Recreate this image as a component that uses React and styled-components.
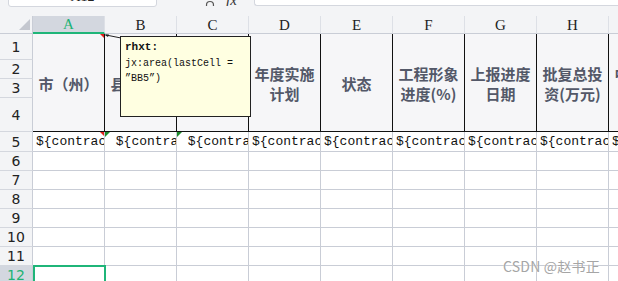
import React from "react";
import styled, { createGlobalStyle } from "styled-components";

const GlobalStyle = createGlobalStyle`
  html, body {
    margin: 0;
    padding: 0;
    background: #ffffff;
  }
  * {
    box-sizing: border-box;
  }
`;

const columns = ["A", "B", "C", "D", "E", "F", "G", "H", "I"];
const headers = [
    "市（州）",
    "县（区）",
    "项目名称",
    "年度实施计划",
    "状态",
    "工程形象进度(%)",
    "上报进度日期",
    "批复总投资(万元)",
    "中央投资(万元)",
];
const rowHeights = [26, 19, 19, 34, 20, 19, 19, 19, 19, 19, 19, 19];

const App = () => {
    return (
        <Page>
            <GlobalStyle />
            <Toolbar>
                <NameBox>A12</NameBox>
                <FxArea>
                    <svg width="12" height="12" viewBox="0 0 12 12">
                        <circle cx="5" cy="5" r="3.5" fill="none" stroke="#555" strokeWidth="1.2" />
                        <line x1="7.6" y1="7.6" x2="11" y2="11" stroke="#555" strokeWidth="1.4" />
                    </svg>
                    <FxText>fx</FxText>
                </FxArea>
                <FormulaBox />
            </Toolbar>
            <Sheet>
                <Corner>
                    <CornerMark />
                </Corner>
                {columns.map((c, i) => (
                    <ColHead key={c} $selected={i === 0}>{c}</ColHead>
                ))}

                {rowHeights.map((h, i) => (
                    <RowHead
                        key={"r" + i}
                        $selected={i === 11}
                        style={{ gridRow: i + 2 }}
                    >
                        {i + 1}
                    </RowHead>
                ))}

                {headers.map((t, i) => (
                    <TitleCell key={t} style={{ gridColumn: i + 2 }}>
                        <span>{t}</span>
                        {i === 0 && <RedMark />}
                    </TitleCell>
                ))}

                {columns.map((c, i) => (
                    <DataCell key={"d" + c} style={{ gridColumn: i + 2 }}>
                        {i === 1 || i === 2 ? "\u00a0${contract}" : "${contract}"}
                        {i === 0 && <RedMark />}
                        {(i === 1 || i === 2) && <GreenMark />}
                    </DataCell>
                ))}

                {Array.from({ length: 7 }).map((_, r) =>
                    columns.map((c, i) => (
                        <Cell
                            key={c + r}
                            style={{ gridRow: r + 7, gridColumn: i + 2 }}
                        >
                            {r === 6 && i === 0 && <Selection />}
                        </Cell>
                    ))
                )}

                <CommentLink width="18" height="6" viewBox="0 0 18 6">
                    <line x1="2" y1="1" x2="17" y2="4" stroke="#222" strokeWidth="1" />
                    <polygon points="0,0.5 5,0.5 4,3" fill="#222" />
                </CommentLink>
                <Comment>
                    <CommentAuthor>rhxt:</CommentAuthor>
                    <CommentBody>
                        jx:area(lastCell =
                        <br />
                        ”BB5”)
                    </CommentBody>
                </Comment>
            </Sheet>
            <Watermark>CSDN @赵书正</Watermark>
        </Page>
    );
};

const Page = styled.div`
    position: relative;
    width: 618px;
    height: 281px;
    overflow: hidden;
    background: #f3f4f6;
`;

const Toolbar = styled.div`
    display: flex;
    height: 16px;
    padding-left: 8px;
    background: #f3f4f6;
`;

const NameBox = styled.div`
    width: 149px;
    height: 22px;
    margin-top: -15px;
    background: #ffffff;
    border: 1px solid #d4d7de;
    border-radius: 3px;
    font: 14px/22px "Liberation Serif", serif;
    color: #222;
    text-align: center;
`;

const FxArea = styled.div`
    display: flex;
    align-items: flex-end;
    gap: 9px;
    width: 97px;
    height: 6px;
    padding-left: 48px;
    overflow: hidden;
    svg {
        margin-bottom: -6px;
    }
`;

const FxText = styled.span`
    font: italic 15px/15px "Liberation Serif", serif;
    color: #333;
    margin-bottom: -2px;
`;

const FormulaBox = styled.div`
    flex: 1;
    height: 22px;
    margin-top: -16px;
    background: #ffffff;
    border: 1px solid #d4d7de;
    border-right: none;
    border-radius: 3px 0 0 3px;
`;

const Sheet = styled.div`
    position: relative;
    display: grid;
    grid-template-columns: 33px repeat(9, 72px);
    grid-template-rows: 18px ${rowHeights.map(h => h + "px").join(" ")};
    background: #ffffff;
`;

const Corner = styled.div`
    position: relative;
    grid-row: 1;
    grid-column: 1;
    background: #f3f4f6;
    border-right: 1px solid #c9cdd6;
    border-bottom: 1px solid #c9cdd6;
`;

const CornerMark = styled.div`
    position: absolute;
    right: 2px;
    bottom: 3px;
    width: 0;
    height: 0;
    border-left: 11px solid transparent;
    border-bottom: 11px solid #c4c7cf;
`;

const ColHead = styled.div`
    grid-row: 1;
    display: flex;
    align-items: center;
    justify-content: center;
    background: ${p => (p.$selected ? "#d3d7df" : "#f3f4f6")};
    border-right: 1px solid #dde0e6;
    border-bottom: ${p => (p.$selected ? "2px solid #1fb579" : "1px solid #c9cdd6")};
    font: 15px "Liberation Serif", serif;
    color: ${p => (p.$selected ? "#20b274" : "#222")};
    padding-top: 1px;
`;

const RowHead = styled.div`
    grid-column: 1;
    display: flex;
    align-items: center;
    justify-content: center;
    background: ${p => (p.$selected ? "#d3d7df" : "#f3f4f6")};
    border-right: 1px solid #c9cdd6;
    border-bottom: 1px solid #d4d7de;
    font: 14px "DejaVu Sans", sans-serif;
    color: ${p => (p.$selected ? "#20b274" : "#222")};
`;

const TitleCell = styled.div`
    position: relative;
    grid-row: 2 / span 4;
    display: flex;
    align-items: center;
    justify-content: center;
    padding: 0 5px;
    background: #f6f6f8;
    border-right: 1px solid #111;
    border-bottom: 1px solid #111;
    font: bold 15px/20px "Noto Sans CJK SC", sans-serif;
    color: #535868;
    text-align: center;
    overflow: hidden;
    span {
        display: block;
        width: 61px;
        padding-top: 2px;
    }
`;

const DataCell = styled.div`
    position: relative;
    grid-row: 6;
    padding-left: 3px;
    border-right: 1px solid #c9cdd6;
    border-bottom: 1px solid #c9cdd6;
    font: 13px/19px "Liberation Mono", monospace;
    color: #111;
    white-space: nowrap;
    overflow: hidden;
`;

const Cell = styled.div`
    position: relative;
    border-right: 1px solid #c9cdd6;
    border-bottom: 1px solid #c9cdd6;
`;

const RedMark = styled.div`
    position: absolute;
    top: 0;
    right: -1px;
    width: 0;
    height: 0;
    border-left: 5px solid transparent;
    border-top: 5px solid #e0201b;
`;

const GreenMark = styled.div`
    position: absolute;
    top: 0;
    left: 0;
    width: 0;
    height: 0;
    border-right: 5px solid transparent;
    border-top: 5px solid #1d8a2c;
`;

const Selection = styled.div`
    position: absolute;
    top: -1px;
    left: 0;
    right: -2px;
    bottom: -4px;
    border: 2px solid #1fb579;
`;

const CommentLink = styled.svg`
    position: absolute;
    left: 104px;
    top: 18px;
`;

const Comment = styled.div`
    position: absolute;
    left: 120px;
    top: 20px;
    width: 131px;
    height: 81px;
    padding: 2px 4px;
    background: #ffffe1;
    border: 1px solid #222;
    color: #111;
`;

const CommentAuthor = styled.div`
    font: bold 11px/16px "Liberation Mono", monospace;
    margin-bottom: 1px;
`;

const CommentBody = styled.div`
    font: 10px/15px "Liberation Mono", monospace;
`;

const Watermark = styled.div`
    position: absolute;
    left: 503px;
    top: 256px;
    font: 14px "Noto Sans CJK SC", sans-serif;
    color: #a5a5a5;
    text-shadow: 0 0 1px #fff;
    letter-spacing: 0.2px;
`;

export default App;
